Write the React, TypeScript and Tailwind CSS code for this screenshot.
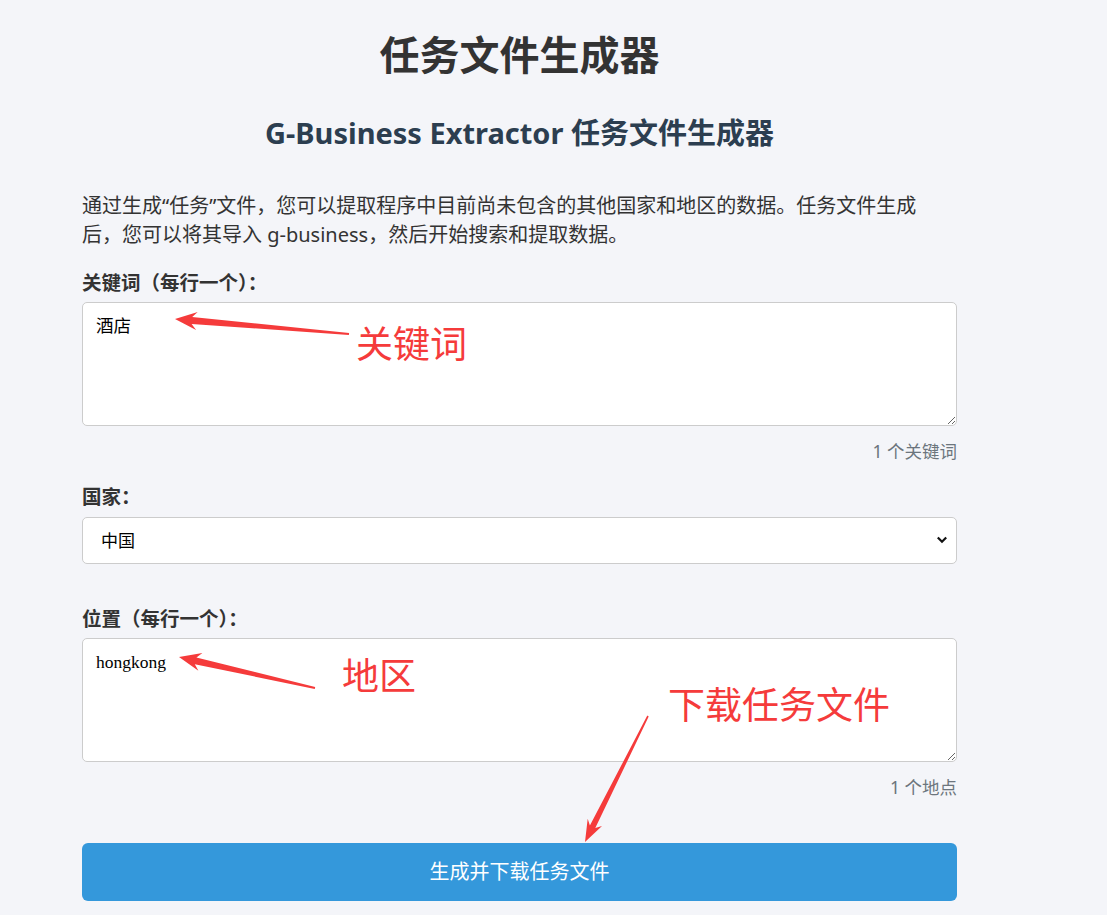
import { useState } from 'react';

const cjk = { fontFamily: '"Noto Sans", "Noto Sans CJK SC", sans-serif' };

function arrowPoints(tx: number, ty: number, ex: number, ey: number, head = 22, hw = 9, neck = 17, nw = 3.5, tw = 1) {
  const dx = ex - tx;
  const dy = ey - ty;
  const len = Math.hypot(dx, dy);
  const ux = dx / len;
  const uy = dy / len;
  const nx = -uy;
  const ny = ux;
  const pts = [
    [tx, ty],
    [tx + head * ux + hw * nx, ty + head * uy + hw * ny],
    [tx + neck * ux + nw * nx, ty + neck * uy + nw * ny],
    [ex + tw * nx, ey + tw * ny],
    [ex - tw * nx, ey - tw * ny],
    [tx + neck * ux - nw * nx, ty + neck * uy - nw * ny],
    [tx + head * ux - hw * nx, ty + head * uy - hw * ny],
  ];
  return pts.map(([a, b]) => `${a.toFixed(1)},${b.toFixed(1)}`).join(' ');
}

function Annotations() {
  return (
    <>
      <svg className="pointer-events-none absolute left-0 top-0" width="1107" height="915">
        <polygon points={arrowPoints(175, 319, 349, 334)} fill="#f53b3b" />
        <polygon points={arrowPoints(179, 657, 315, 688)} fill="#f53b3b" />
        <polygon points={arrowPoints(585, 842, 648, 716, 22, 8, 17, 3, 0.8)} fill="#f53b3b" />
      </svg>
      <div className="pointer-events-none absolute left-[356px] top-[325px] text-[37px] leading-none text-[#f53b3b]" style={cjk}>
        关键词
      </div>
      <div className="pointer-events-none absolute left-[342px] top-[657px] text-[37px] leading-none text-[#f53b3b]" style={cjk}>
        地区
      </div>
      <div className="pointer-events-none absolute left-[668px] top-[686px] text-[37px] leading-none text-[#f53b3b]" style={cjk}>
        下载任务文件
      </div>
    </>
  );
}

export default function App() {
  const [keywords, setKeywords] = useState('酒店');
  const [country, setCountry] = useState('CN');
  const [locations, setLocations] = useState('hongkong');

  const count = (s: string) => s.split('\n').filter((l) => l.trim()).length;

  return (
    <div className="relative min-h-[915px] w-full overflow-hidden bg-[#f4f5f9]" style={cjk}>
      <div className="ml-[82px] flex w-[875px] flex-col pt-[31px]">
        <h1 className="text-center text-[40px] font-bold leading-[48px] text-[#333333]">任务文件生成器</h1>
        <h2 className="mt-[36px] text-center text-[29px] font-bold leading-[36px] text-[#2c3e50]">
          G-Business Extractor 任务文件生成器
        </h2>
        <p className="mt-[40px] w-[850px] text-[20px] leading-[29px] text-[#333333]">
          通过生成“任务”文件，您可以提取程序中目前尚未包含的其他国家和地区的数据。任务文件生成后，您可以将其导入 g-business，然后开始搜索和提取数据。
        </p>

        <label className="mt-[22px] text-[19.5px] font-bold leading-[24px] text-[#333333]">关键词（每行一个）：</label>
        <textarea
          value={keywords}
          onChange={(e) => setKeywords(e.target.value)}
          className="mt-[7px] h-[124px] w-full rounded-[5px] border border-[#cccccc] bg-white px-[13px] py-[11px] text-[17.5px] leading-[24px] text-black outline-none"
          style={{ fontFamily: '"Liberation Serif", "Noto Sans CJK SC", serif' }}
        />
        <div className="mt-[13px] text-right text-[17.5px] leading-[24px] text-[#6c757d]">{count(keywords)} 个关键词</div>

        <label className="mt-[22px] text-[19.5px] font-bold leading-[24px] text-[#333333]">国家：</label>
        <div className="relative mt-[8px]">
          <select
            value={country}
            onChange={(e) => setCountry(e.target.value)}
            className="h-[47px] w-full appearance-none rounded-[5px] border border-[#cccccc] bg-white pl-[18px] text-[17px] text-black outline-none"
          >
            <option value="CN">中国</option>
            <option value="US">美国</option>
            <option value="GB">英国</option>
          </select>
          <svg className="pointer-events-none absolute right-[9px] top-[18px]" width="12" height="10" viewBox="0 0 12 10">
            <path d="M1.8 2.5 L6 6.8 L10.2 2.5" fill="none" stroke="#111" strokeWidth="2.2" />
          </svg>
        </div>

        <label className="mt-[43px] text-[19.5px] font-bold leading-[24px] text-[#333333]">位置（每行一个）：</label>
        <textarea
          value={locations}
          onChange={(e) => setLocations(e.target.value)}
          className="mt-[7px] h-[124px] w-full rounded-[5px] border border-[#cccccc] bg-white px-[13px] py-[11px] text-[17.5px] leading-[24px] text-black outline-none"
          style={{ fontFamily: '"Liberation Serif", "Noto Sans CJK SC", serif' }}
        />
        <div className="mt-[13px] text-right text-[17.5px] leading-[24px] text-[#6c757d]">{count(locations)} 个地点</div>

        <button className="mt-[44px] h-[58px] w-full rounded-[6px] bg-[#3498db] text-[20px] text-white">生成并下载任务文件</button>
      </div>
      <Annotations />
    </div>
  );
}
